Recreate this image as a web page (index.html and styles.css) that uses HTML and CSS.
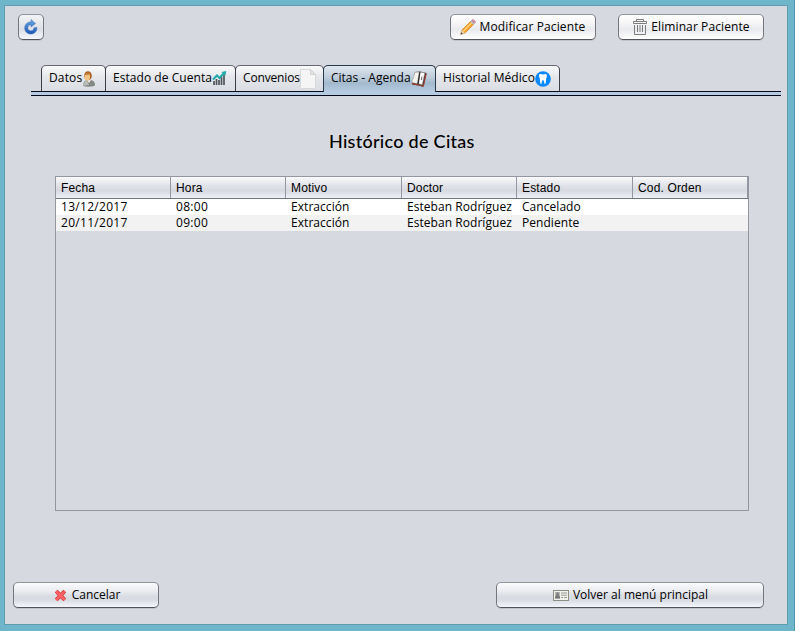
FILE: index.html
```html
<!DOCTYPE html>
<html lang="es">
<head>
<meta charset="utf-8">
<title>Histórico de Citas</title>
<link rel="stylesheet" href="styles.css">
</head>
<body>
<main class="panel">
  <header class="toolbar">
    <button class="btn refresh" aria-label="Actualizar">
      <svg width="16" height="16" viewBox="0 0 16 16"><defs><linearGradient id="blue" x2="0" y2="1"><stop stop-color="#6ba7e3"/><stop offset="1" stop-color="#1b55b5"/></linearGradient></defs><path d="M8 0.5L12.5 4.5L8 8V5.8C5.8 6 4.8 7.2 4.8 9C4.8 10.8 6 11.8 7.8 11.8C9.8 11.8 10.8 10.7 11 8.7L14 8.5C14 12.5 11.5 15 7.8 15C4.2 15 1.7 12.6 1.7 9C1.7 5.5 4.3 3 8 2.8Z" fill="url(#blue)" stroke="#3d73b8" stroke-width=".5"/></svg>
    </button>
    <button class="btn modify">
      <svg width="16" height="16" viewBox="0 0 16 16"><path d="M.8 15.2L2 11L11 2L14 5L5 14Z" fill="#f5a42c" stroke="#c77c25" stroke-width=".7"/><path d="M3 11.5L11.3 3.2L12.2 4.1L4 12.4Z" fill="#ffd878"/><path d="M.8 15.2L2 11L5 14Z" fill="#eed4aa"/><path d="M.6 15.4L1.2 13.2L2.8 14.8Z" fill="#444"/><path d="M10.3 2.7L11.5 1.5L14.5 4.5L13.3 5.7Z" fill="#b9bec9"/><path d="M11.5 1.5L12.5.7H13.6L15.3 2.4V3.7L14.5 4.5Z" fill="#d592a5" stroke="#a56c89" stroke-width=".5"/></svg>
      <span>Modificar Paciente</span>
    </button>
    <button class="btn delete">
      <svg width="14" height="16" viewBox="0 0 14 16" fill="none" stroke="#7c7c7c"><path d="M3.5 2.5V.5H10.5V2.5M.5 4.5V2.5H13.5V4.5ZM1.5 6V15.5H12.5V6M4.5 6V13M7 6V13M9.5 6V13"/></svg>
      <span>Eliminar Paciente</span>
    </button>
  </header>

  <nav class="tabs">
    <a class="tab t-datos"><span>Datos</span>
      <svg width="14" height="16" viewBox="0 0 14 16"><path d="M1.5 15C1 11.8 2 9.5 5 9H9C12 9.5 13 11.5 13 14.5C11 16 4 16 1.5 15Z" fill="#858985"/><path d="M1.7 14.6C1.7 12 2.5 10 5 9.3L7 14Z" fill="#b9bdb8"/><path d="M5 9L7 12L9 9Z" fill="#eee"/><ellipse cx="6" cy="4.8" rx="3.8" ry="4.5" fill="#a65b22"/><ellipse cx="5.3" cy="5.9" rx="2.8" ry="3.7" fill="#f2c287"/><path d="M2.5 4C3 1 8 .5 9.3 3L7 3.8Z" fill="#c57b31"/></svg></a>
    <a class="tab t-cuenta"><span>Estado de Cuenta</span>
      <svg width="15" height="15" viewBox="0 0 15 15"><path d="M2 14V10M4.5 14V8M7 14V9M9.5 14V6M12 14V4" stroke="#50565a" stroke-width="1.7"/><path d="M1 8.5L5 4.5L7.5 7L12 2" fill="none" stroke="#22aaa9" stroke-width="2"/><path d="M9.5 1L14.2 0L13.5 4.8Z" fill="#22aaa9"/></svg></a>
    <a class="tab t-conv"><span>Convenios</span>
      <svg width="16" height="20" viewBox="0 0 16 20"><path d="M.5.5H10.5L15.5 5.5V19.5H.5Z" fill="#f5f5f5" stroke="#d8d8d8"/><path d="M10.5.5V5.5H15.5Z" fill="#e3e3e3" stroke="#c9c9c9" stroke-width=".7"/></svg></a>
    <a class="tab t-citas selected"><span>Citas - Agenda</span>
      <svg width="16" height="16" viewBox="0 0 16 16"><path d="M4 1L9 .5L15.5 2L12.5 15.8L7 14.5L1 13.5Z" fill="#4b3b35"/><path d="M4 1.2L8.3 1L6.3 12.6L.8 11.5Z" fill="#f4f3ee" stroke="#999" stroke-width=".5"/><path d="M9.3 1L13.8 2L11.2 13.8L7.6 12.8Z" fill="#fff" stroke="#888" stroke-width=".5"/><path d="M8.9 1L7 13" stroke="#282828"/><path d="M11 5.5L10.3 9" stroke="#666"/><path d="M.7 12.4L7 13.9L12.4 15.3L15.3 2.7" fill="none" stroke="#a94132"/></svg></a>
    <a class="tab t-hist"><span>Historial Médico</span>
      <svg width="16" height="16" viewBox="0 0 16 16"><circle cx="8" cy="8" r="7.8" fill="#0788ff"/><path d="M4.3 3.5C5.5 2.5 6.7 3.5 8 3.5S10.7 2.5 11.7 3.7C12.5 5 11 7 11 9C10.8 11 10.8 13 10 13C9 13 9.3 9 8 9S7 13 6 13C5.2 13 5.2 11 5 9C5 7 3.3 5 4.3 3.5Z" fill="#fff"/></svg></a>
  </nav>
  <div class="strip"></div>

  <h1><span>Histórico de Citas</span></h1>

  <section class="grid">
    <div class="row head"><div>Fecha</div><div>Hora</div><div>Motivo</div><div>Doctor</div><div>Estado</div><div>Cod. Orden</div></div>
    <div class="row"><div class="num">13/12/2017</div><div class="num">08:00</div><div>Extracción</div><div>Esteban Rodríguez</div><div>Cancelado</div><div></div></div>
    <div class="row alt"><div class="num">20/11/2017</div><div class="num">09:00</div><div>Extracción</div><div>Esteban Rodríguez</div><div>Pendiente</div><div></div></div>
  </section>

  <footer class="actions">
    <button class="btn cancel">
      <svg width="13" height="13" viewBox="0 0 13 13"><path d="M2.2 2.2L10.8 10.8M10.8 2.2L2.2 10.8" stroke="#d93438" stroke-width="4"/><path d="M2.2 2.2L10.8 10.8M10.8 2.2L2.2 10.8" stroke="#ff6464" stroke-width="2.6"/></svg>
      <span>Cancelar</span>
    </button>
    <button class="btn back">
      <svg width="16" height="11" viewBox="0 0 16 11"><rect x=".5" y=".5" width="15" height="10" fill="#f1f1ec" stroke="#8c8f86"/><path d="M2 2H7V8.5H2Z" fill="#b5b6b2"/><path d="M3.5 2.5H5.5V5L7 7V8.5H2V7L3.5 5Z" fill="#777"/><path d="M8 3H14M8 5.2H14M8 7.5H10M11 7.5H14" stroke="#999b96"/></svg>
      <span>Volver al menú principal</span>
    </button>
  </footer>
</main>
</body>
</html>
```
FILE: styles.css
```css
* { box-sizing: border-box; }
body {
  margin: 0;
  width: 795px;
  height: 631px;
  padding: 5px 6px 6px 4px;
  background: #6fb6cb;
  border-right: 1px solid #4e96ab;
  font: 12px/16px "Open Sans", sans-serif;
  color: #000;
}
.panel {
  width: 784px;
  height: 620px;
  border: 1px solid #609eaf;
  background: #d6d9df;
  display: flex;
  flex-direction: column;
}
.toolbar { display: flex; height: 59px; padding: 8px 23px 0 13px; flex: none; }
.btn {
  display: flex;
  align-items: center;
  justify-content: center;
  height: 26px;
  padding: 0;
  border: 1px solid #73767c;
  border-top-color: #92959c;
  border-bottom-color: #505359;
  border-radius: 5px;
  box-shadow: 0 1px 0 #bfc3cb;
  background: linear-gradient(#fbfbfc 0%, #e9ebef 35%, #d9dce2 55%, #d8dbe2 70%, #f4f6fa 100%);
  font: inherit;
  color: #000;
  white-space: nowrap;
}
.btn svg, .tab svg { flex: none; }
.refresh { width: 26px; background: linear-gradient(#f2f3f5, #dcdfe5 60%, #f4f6fa); }
.modify, .delete { background: linear-gradient(#fff, #f5f5f6 35%, #e9eaee 60%, #fff); }
.modify { width: 146px; margin-left: auto; gap: 4px; letter-spacing: .12px; padding-right: 1px; }
.delete { width: 146px; margin-left: 22px; gap: 4px; letter-spacing: .1px; padding-left: 1px; }
.tabs { display: flex; height: 26px; padding-left: 36px; flex: none; }
.tab {
  display: flex;
  align-items: center;
  height: 26px;
  padding: 0 0 2px 7px;
  margin-right: -1px;
  border: 1px solid #3b3e47;
  border-top: 1px solid #666971;
  border-bottom: 0;
  border-radius: 5px 5px 0 0;
  background: linear-gradient(#fafafb, #e4e6ea 45%, #dadde3);
  white-space: nowrap;
}
.tab svg { position: relative; top: 1px; }
.t-datos { width: 65px; letter-spacing: .15px; }
.t-cuenta { width: 131px; letter-spacing: .05px; }
.t-conv { width: 89px; letter-spacing: -.15px; }
.t-citas { width: 113px; }
.t-hist { width: 125px; letter-spacing: .08px; }
.selected {
  height: 27px;
  padding-bottom: 3px;
  position: relative;
  border-color: #29394c;
  background: linear-gradient(#dfe7ee, #bdccda 45%, #a3bacd 65%, #b5cbe2);
}
.strip {
  flex: none;
  height: 5px;
  margin: 0 6px 0 26px;
  border: solid #07081c;
  border-width: 1px 0;
  background: #b5cbe2;
}
h1 { margin: 34px 0 0 324px; font: 500 18px/22px Lato, sans-serif; letter-spacing: .28px; height: 46px; flex: none; white-space: nowrap; }
.grid { width: 694px; height: 335px; margin-left: 50px; border: 1px solid #9297a1; flex: none; }
.row { display: grid; grid-template-columns: 115px 115px 116px 115px 116px 115px; height: 16px; background: #fff; }
.row > div { padding-left: 5px; line-height: 16px; white-space: nowrap; letter-spacing: .05px; }
.row > .num { letter-spacing: .3px; }
.alt { background: #f2f2f2; }
.head {
  height: 22px;
  border-bottom: 1px solid #70747d;
  background: linear-gradient(#fafafb, #e1e3e8 40%, #d6d9df 65%, #eef1f7);
  font: 12px/21px "Liberation Sans", sans-serif;
}
.head > div { height: 21px; line-height: 23px; border-right: 1px solid #9297a1; letter-spacing: .15px; }
.actions { display: flex; justify-content: space-between; margin: auto 23px 16px 8px; }
.cancel { width: 146px; gap: 5px; padding-left: 2px; }
.back { width: 268px; gap: 4px; padding-left: 1px; }
```
